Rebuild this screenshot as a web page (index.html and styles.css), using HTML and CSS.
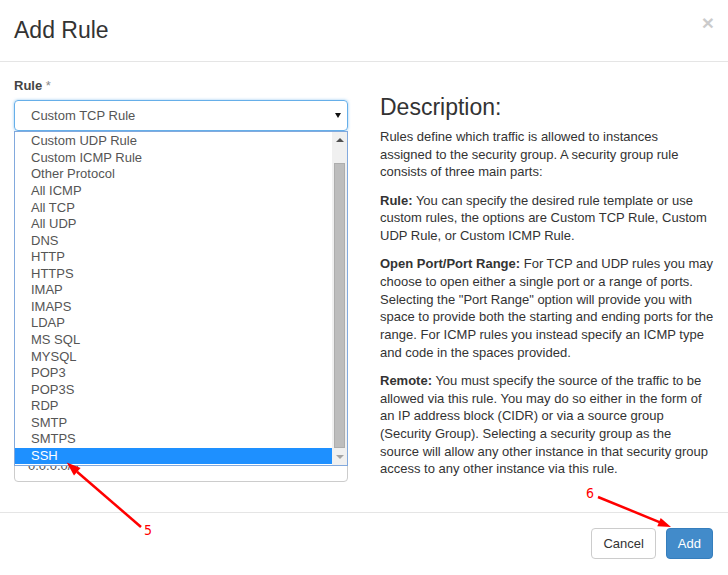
FILE: index.html
```html
<!DOCTYPE html>
<html>
<head>
<meta charset="utf-8">
<title>Add Rule</title>
<link rel="stylesheet" href="styles.css">
</head>
<body>
<div class="modal">
  <div class="modal-header">
    <h2 class="title">Add Rule</h2>
    <button class="close">×</button>
  </div>
  <div class="modal-body">
    <div class="col">
      <label class="field-label">Rule <span class="req">*</span></label>
      <div class="select-wrap">
        <div class="select"><span>Custom TCP Rule</span><span class="caret"></span></div>
        <div class="dropdown">
          <div class="options">
            <div class="opt">Custom UDP Rule</div>
            <div class="opt">Custom ICMP Rule</div>
            <div class="opt">Other Protocol</div>
            <div class="opt">All ICMP</div>
            <div class="opt">All TCP</div>
            <div class="opt">All UDP</div>
            <div class="opt">DNS</div>
            <div class="opt">HTTP</div>
            <div class="opt">HTTPS</div>
            <div class="opt">IMAP</div>
            <div class="opt">IMAPS</div>
            <div class="opt">LDAP</div>
            <div class="opt">MS SQL</div>
            <div class="opt">MYSQL</div>
            <div class="opt">POP3</div>
            <div class="opt">POP3S</div>
            <div class="opt">RDP</div>
            <div class="opt">SMTP</div>
            <div class="opt">SMTPS</div>
            <div class="opt sel">SSH</div>
          </div>
          <div class="scrollbar">
            <div class="sb-btn"><span class="tri-up"></span></div>
            <div class="sb-track"><div class="sb-thumb"></div></div>
            <div class="sb-btn"><span class="tri-down"></span></div>
          </div>
        </div>
      </div>
      <div class="cidr">0.0.0.0/0</div>
    </div>
    <div class="col desc">
      <h3 class="desc-title">Description:</h3>
      <p>Rules define which traffic is allowed to instances<br>assigned to the security group. A security group rule<br>consists of three main parts:</p>
      <p><b>Rule:</b> You can specify the desired rule template or use<br>custom rules, the options are Custom TCP Rule, Custom<br>UDP Rule, or Custom ICMP Rule.</p>
      <p><b>Open Port/Port Range:</b> For TCP and UDP rules you may<br>choose to open either a single port or a range of ports.<br>Selecting the "Port Range" option will provide you with<br>space to provide both the starting and ending ports for the<br>range. For ICMP rules you instead specify an ICMP type<br>and code in the spaces provided.</p>
      <p><b>Remote:</b> You must specify the source of the traffic to be<br>allowed via this rule. You may do so either in the form of<br>an IP address block (CIDR) or via a source group<br>(Security Group). Selecting a security group as the<br>source will allow any other instance in that security group<br>access to any other instance via this rule.</p>
    </div>
  </div>
  <div class="modal-footer">
    <button class="btn">Cancel</button>
    <button class="btn btn-primary">Add</button>
  </div>
  <svg class="annot" width="728" height="575" viewBox="0 0 728 575">
    <line x1="141" y1="527" x2="77" y2="471.7" stroke="#ff0000" stroke-width="2.5"/>
    <polygon points="66.7,462.5 80.6,467.9 74,475.5" fill="#ff0000"/>
    <text x="144" y="535" class="num">5</text>
    <line x1="598" y1="497" x2="660" y2="522.3" stroke="#ff0000" stroke-width="2.5"/>
    <polygon points="671,527 657.3,526.3 660.7,517.9" fill="#ff0000"/>
    <text x="586" y="498" class="num">6</text>
  </svg>
</div>
</body>
</html>
```

FILE: styles.css
```css
* { box-sizing: border-box; }

body {
  margin: 0;
  font-family: "Liberation Sans", Arial, sans-serif;
  color: #333;
  background: #fff;
}

.modal {
  position: relative;
  width: 728px;
  height: 575px;
  display: flex;
  flex-direction: column;
  background: #fff;
}

.modal-header {
  display: flex;
  justify-content: space-between;
  align-items: flex-start;
  padding: 17px 14px 18px;
  border-bottom: 1px solid #e5e5e5;
}

.title {
  margin: 0;
  font-size: 23px;
  font-weight: normal;
  line-height: 26px;
  color: #333;
}

.close {
  margin-top: -5px;
  padding: 0;
  border: 0;
  background: none;
  font-family: inherit;
  font-size: 21px;
  font-weight: bold;
  line-height: 21px;
  color: #000;
  opacity: 0.2;
}

.modal-body {
  flex: 1;
  display: flex;
  gap: 32px;
  padding: 15px 14px;
}

.col {
  flex: 1;
  min-width: 0;
}

.field-label {
  display: block;
  margin-bottom: 5px;
  font-size: 13px;
  font-weight: bold;
  line-height: 18px;
  color: #444;
}

.req {
  color: #888;
  font-weight: normal;
}

.select-wrap {
  position: relative;
}

.select {
  height: 31px;
  display: flex;
  align-items: center;
  justify-content: space-between;
  padding: 0 6px 0 16px;
  border: 1px solid #66afe9;
  border-radius: 4px;
  box-shadow: 0 0 3px rgba(102, 175, 233, 0.7);
  font-size: 13px;
  color: #555;
}

.caret {
  width: 0;
  height: 0;
  border-left: 3px solid transparent;
  border-right: 3px solid transparent;
  border-top: 5px solid #111;
}

.dropdown {
  position: absolute;
  top: 100%;
  left: 0;
  right: 0;
  height: 335px;
  display: flex;
  border: 1px solid #82a9dd;
  background: #fff;
  z-index: 5;
}

.options {
  flex: 1;
  padding-top: 1.4px;
}

.opt {
  height: 16.56px;
  line-height: 16.56px;
  padding-left: 16px;
  font-size: 13px;
  color: #555;
  white-space: nowrap;
}

.opt.sel {
  background: #1e90ff;
  color: #fff;
}

.scrollbar {
  width: 15px;
  display: flex;
  flex-direction: column;
  background: #f0f0f0;
}

.sb-btn {
  height: 16px;
  display: flex;
  align-items: center;
  justify-content: center;
}

.tri-up {
  width: 0;
  height: 0;
  border-left: 4px solid transparent;
  border-right: 4px solid transparent;
  border-bottom: 4px solid #505050;
}

.tri-down {
  width: 0;
  height: 0;
  border-left: 4px solid transparent;
  border-right: 4px solid transparent;
  border-top: 4px solid #a3a3a3;
}

.sb-track {
  flex: 1;
  padding: 15px 2px 1px;
}

.sb-thumb {
  height: 100%;
  background: #bdbdbd;
  border: 1px solid #adadad;
}

.cidr {
  margin-top: 319px;
  height: 32px;
  padding: 0 13px;
  border: 1px solid #ccc;
  border-radius: 4px;
  font-size: 13px;
  line-height: 30px;
  color: #555;
}

.desc-title {
  margin: 17px 0 8px;
  font-size: 23px;
  font-weight: normal;
  line-height: 26px;
  color: #333;
}

.desc p {
  margin: 0 0 10.5px;
  font-size: 13px;
  line-height: 17.7px;
  white-space: nowrap;
  color: #333;
}

.modal-footer {
  display: flex;
  justify-content: flex-end;
  gap: 10px;
  padding: 15px 15px 16px;
  border-top: 1px solid #e5e5e5;
}

.btn {
  height: 31px;
  padding: 0 11px;
  border: 1px solid #ccc;
  border-radius: 4px;
  background: #fff;
  font-family: inherit;
  font-size: 13px;
  line-height: 29px;
  color: #333;
}

.btn-primary {
  background: #428bca;
  border-color: #357ebd;
  color: #fff;
}

.annot {
  position: absolute;
  top: 0;
  left: 0;
  z-index: 10;
  pointer-events: none;
}

.num {
  font-family: "Liberation Sans Narrow", "DejaVu Sans Condensed", "Liberation Sans", sans-serif;
  font-size: 14px;
  fill: #ff0000;
}
```
